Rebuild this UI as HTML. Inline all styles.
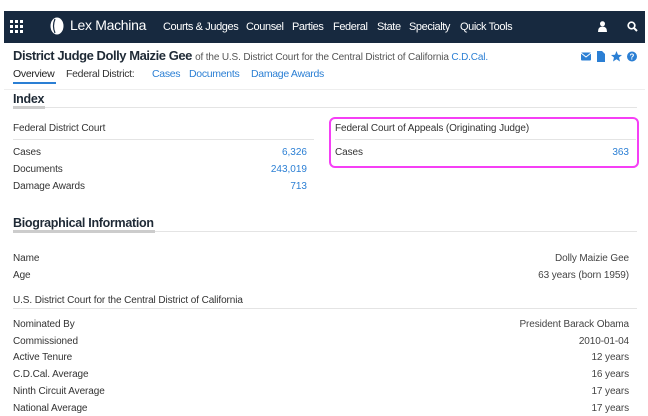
<!DOCTYPE html>
<html><head><meta charset="utf-8"><style>
*{margin:0;padding:0;box-sizing:border-box}
body{width:648px;height:416px;overflow:hidden;background:#fff;font-family:"Liberation Sans",sans-serif;color:#333;position:relative}
.a{position:absolute;white-space:nowrap}
.nav{position:absolute;left:4px;top:11px;width:641px;height:32px;background:#17293f}
.nav .a{color:#fff;font-size:11px;letter-spacing:-0.4px;top:10px}
.l{font-size:10px;color:#333;letter-spacing:-0.1px}
.v{font-size:10px;color:#2b7fd4;text-align:right}
.r{font-size:10px;color:#444;text-align:right;letter-spacing:-0.1px}
.line{position:absolute;height:1px;background:#e4e4e4}
.h{font-weight:bold;font-size:12.5px;color:#1f2a36;letter-spacing:-0.3px}
.sh{font-size:10px;color:#333;letter-spacing:-0.1px}
.t{font-size:10.5px;letter-spacing:-0.3px}
</style></head><body>
<div class="nav">
 <svg class="a" style="left:6px;top:9px" width="13" height="13" viewBox="0 0 13 13" fill="#fff">
  <rect x="0" y="0" width="3" height="3"/><rect x="5" y="0" width="3" height="3"/><rect x="10" y="0" width="3" height="3"/>
  <rect x="0" y="5" width="3" height="3"/><rect x="5" y="5" width="3" height="3"/><rect x="10" y="5" width="3" height="3"/>
  <rect x="0" y="10" width="3" height="3"/><rect x="5" y="10" width="3" height="3"/><rect x="10" y="10" width="3" height="3"/></svg>
 <svg class="a" style="left:46px;top:6px" width="14" height="18" viewBox="0 0 14 18"><ellipse cx="7" cy="9" rx="6.5" ry="8.5" fill="#fff"/><path d="M5 2 Q2 9 5 16" stroke="#17293f" stroke-width="1.2" fill="none"/></svg>
 <div class="a" style="left:66px;top:6px;font-size:14px;letter-spacing:-0.3px">Lex Machina</div>
 <div class="a" style="left:159px">Courts &amp; Judges</div>
 <div class="a" style="left:242px">Counsel</div>
 <div class="a" style="left:288px">Parties</div>
 <div class="a" style="left:329px">Federal</div>
 <div class="a" style="left:373px">State</div>
 <div class="a" style="left:405px">Specialty</div>
 <div class="a" style="left:456px">Quick Tools</div>
 <svg class="a" style="left:594px;top:10px" width="9" height="11" viewBox="0 0 9 11" fill="#fff"><circle cx="4.5" cy="2.8" r="2.5"/><path d="M0 11 Q0 5.5 4.5 5.5 Q9 5.5 9 11Z"/></svg>
 <svg class="a" style="left:623px;top:10px" width="11" height="11" viewBox="0 0 11 11"><circle cx="4.5" cy="4.5" r="3.3" stroke="#fff" stroke-width="1.7" fill="none"/><path d="M7 7 L10 10" stroke="#fff" stroke-width="2"/></svg>
</div>
<div class="a" style="left:13px;top:48px;font-size:13px;letter-spacing:-0.45px;font-weight:bold;color:#1f2a36">District Judge Dolly Maizie Gee <span style="font-weight:normal;font-size:10px;letter-spacing:-0.15px;color:#555">of the U.S. District Court for the Central District of California <span style="color:#2b7fd4">C.D.Cal.</span></span></div>
<svg class="a" style="left:581px;top:51px" width="56" height="11" viewBox="0 0 56 11" fill="#2b7fd4">
 <rect x="0" y="1.5" width="10" height="8" rx="1"/><path d="M0 2 L5 6 L10 2" stroke="#fff" stroke-width="1" fill="none"/>
 <path d="M16 0 H21 L24 3 V11 H16Z"/>
 <path d="M35.5 0 L37 3.8 L41 4 L38 6.5 L39 10.5 L35.5 8.3 L32 10.5 L33 6.5 L30 4 L34 3.8Z"/>
 <circle cx="51" cy="5.5" r="5"/><text x="51" y="8.5" font-size="8" fill="#fff" text-anchor="middle" font-weight="bold" font-family="Liberation Sans">?</text>
</svg>
<div class="a t" style="left:13px;top:68px;color:#222">Overview</div>
<div class="a" style="left:13px;top:82px;width:43px;height:2px;background:#2b7fd4"></div>
<div class="a t" style="left:66px;top:68px;color:#333">Federal District:</div>
<div class="a t" style="left:152px;top:68px;color:#2b7fd4">Cases</div>
<div class="a t" style="left:189px;top:68px;color:#2b7fd4">Documents</div>
<div class="a t" style="left:251px;top:68px;color:#2b7fd4">Damage Awards</div>
<div class="line" style="left:4px;top:89px;width:641px;background:#eee"></div>
<div class="a h" style="left:13px;top:92px">Index</div>
<div class="line" style="left:13px;top:107px;width:624px"></div>
<div class="a" style="left:13px;top:106px;width:32px;height:3px;background:#ccc"></div>
<div class="a sh" style="left:13px;top:123px">Federal District Court</div>
<div class="line" style="left:13px;top:139px;width:301px"></div>
<div class="a l" style="left:13px;top:147px">Cases</div><div class="a v" style="right:341px;top:147px">6,326</div>
<div class="a l" style="left:13px;top:164px">Documents</div><div class="a v" style="right:341px;top:164px">243,019</div>
<div class="a l" style="left:13px;top:181px">Damage Awards</div><div class="a v" style="right:341px;top:181px">713</div>
<div class="a" style="left:329px;top:117px;width:310px;height:51px;border:2px solid #f53ff5;border-radius:6px"></div>
<div class="a sh" style="left:335px;top:123px">Federal Court of Appeals (Originating Judge)</div>
<div class="line" style="left:335px;top:139px;width:301px"></div>
<div class="a l" style="left:335px;top:147px">Cases</div><div class="a v" style="right:19px;top:147px">363</div>
<div class="a h" style="left:13px;top:216px">Biographical Information</div>
<div class="line" style="left:13px;top:231px;width:624px"></div>
<div class="a" style="left:13px;top:230px;width:142px;height:3px;background:#ccc"></div>
<div class="a l" style="left:13px;top:253px">Name</div><div class="a r" style="right:19px;top:253px">Dolly Maizie Gee</div>
<div class="a l" style="left:13px;top:270px">Age</div><div class="a r" style="right:19px;top:270px">63 years (born 1959)</div>
<div class="a sh" style="left:13px;top:295px">U.S. District Court for the Central District of California</div>
<div class="line" style="left:13px;top:308px;width:624px"></div>
<div class="a l" style="left:13px;top:319px">Nominated By</div><div class="a r" style="right:19px;top:319px">President Barack Obama</div>
<div class="a l" style="left:13px;top:336px">Commissioned</div><div class="a r" style="right:19px;top:336px">2010-01-04</div>
<div class="a l" style="left:13px;top:352px">Active Tenure</div><div class="a r" style="right:19px;top:352px">12 years</div>
<div class="a l" style="left:13px;top:369px">C.D.Cal. Average</div><div class="a r" style="right:19px;top:369px">16 years</div>
<div class="a l" style="left:13px;top:386px">Ninth Circuit Average</div><div class="a r" style="right:19px;top:386px">17 years</div>
<div class="a l" style="left:13px;top:403px">National Average</div><div class="a r" style="right:19px;top:403px">17 years</div>
</body></html>
